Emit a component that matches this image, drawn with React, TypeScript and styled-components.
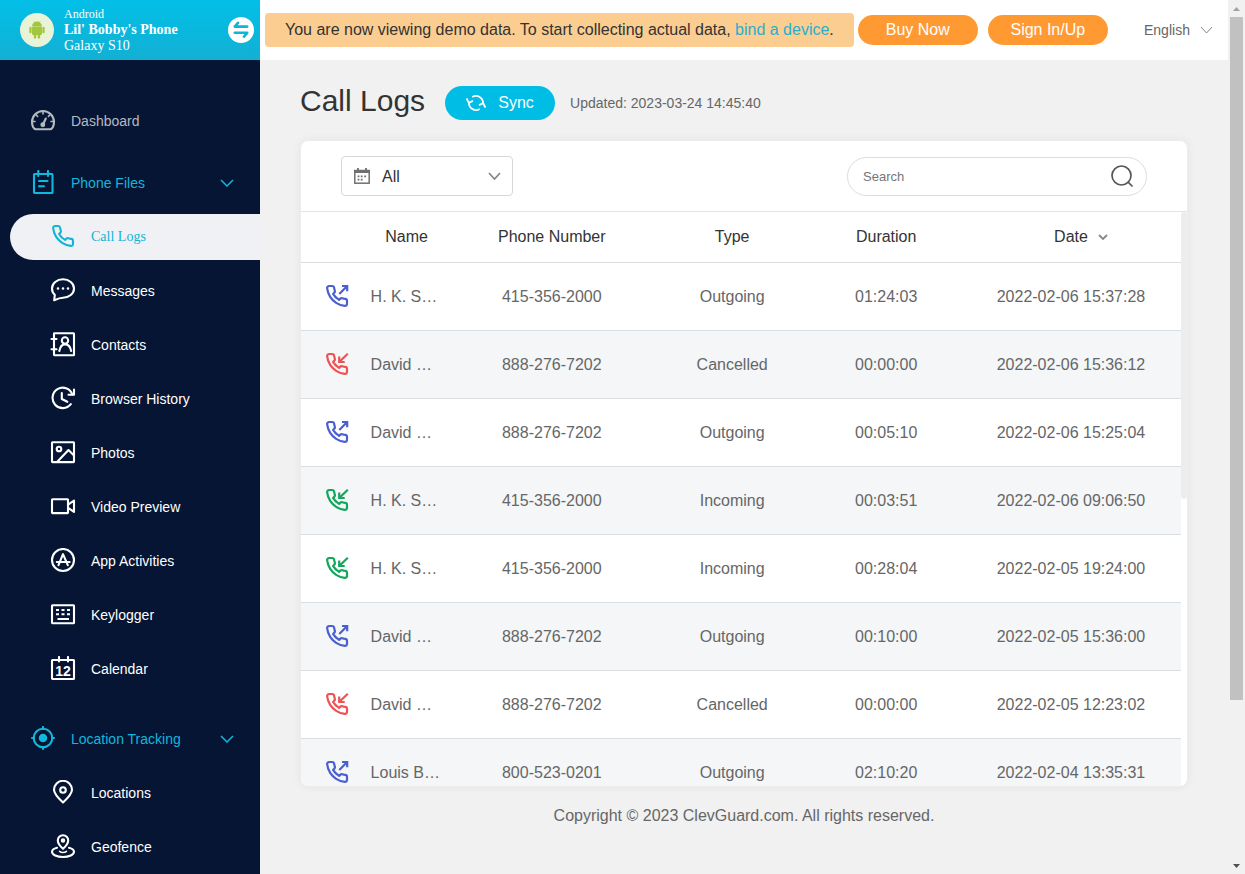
import React from "react";
import styled, { createGlobalStyle } from "styled-components";

const GlobalStyle = createGlobalStyle`
  *, *::before, *::after { box-sizing: border-box; }
  body {
    margin: 0;
    background: #f1f1f1;
    color: #333;
    font: 16px/20px "Liberation Sans", Arial, sans-serif;
  }
  button, select, input { font-family: inherit; }
  ul { list-style: none; margin: 0; padding: 0; }
  svg { display: block; flex: none; }
`;

/* ---------- page frame ---------- */

const Page = styled.div`
  display: flex;
  height: 100vh;
  overflow: hidden;
`;

const Sidebar = styled.aside`
  flex: none;
  width: 260px;
  overflow: hidden;
  background: #061533;
`;

const Main = styled.div`
  flex: 1;
  min-width: 0;
  display: flex;
  flex-direction: column;
`;

/* ---------- sidebar ---------- */

const DeviceBar = styled.header`
  display: flex;
  align-items: center;
  gap: 10px;
  height: 60px;
  padding: 0 6px 0 20px;
  background: linear-gradient(#02bfe7, #12b0d3);
  color: #fff;
  font: 14px/16px "Liberation Serif", "Times New Roman", serif;
`;

const Avatar = styled.div`
  display: grid;
  place-items: center;
  width: 34px;
  height: 34px;
  border-radius: 50%;
  background: #e9f3d8;
`;

const DeviceText = styled.div`
  flex: 1;
`;

const DeviceOs = styled.div`
  font-size: 12px;
`;

const DeviceName = styled.div`
  font-weight: bold;
`;

const SwitchButton = styled.button`
  display: grid;
  place-items: center;
  width: 26px;
  height: 26px;
  padding: 0;
  border: 0;
  border-radius: 50%;
  background: #fff;
  color: #0fb4d8;
`;

const Nav = styled.nav`
  padding-top: 30px;
  font-size: 14px;
`;

const NavGroup = styled.a<{ $open?: boolean }>`
  display: flex;
  align-items: center;
  gap: 15px;
  height: 62px;
  padding: 0 26px 0 30px;
  color: ${(p) => (p.$open ? "#12b7dc" : "#b4b9c2")};
  text-decoration: none;
`;

const NavLabel = styled.span`
  flex: 1;
`;

const SubList = styled.ul`
  display: flex;
  flex-direction: column;
  gap: 8px;
  padding-bottom: 16px;
`;

const NavItem = styled.a<{ $active?: boolean }>`
  display: flex;
  align-items: center;
  gap: 15px;
  height: 46px;
  margin-left: 10px;
  padding-left: 40px;
  border-radius: 23px 0 0 23px;
  color: ${(p) => (p.$active ? "#12b3d6" : "#fff")};
  background: ${(p) => (p.$active ? "#f0f1f5" : "transparent")};
  font-family: ${(p) => (p.$active ? '"Liberation Serif", "Times New Roman", serif' : "inherit")};
  text-decoration: none;
`;

/* ---------- top bar ---------- */

const TopBar = styled.header`
  flex: none;
  display: flex;
  align-items: center;
  height: 60px;
  padding: 0 15px 0 5px;
  background: #fff;
`;

const Notice = styled.p`
  margin: 0 4px 0 0;
  padding: 7px 20px;
  border-radius: 4px;
  background: #fbcd91;
  white-space: nowrap;
`;

const NoticeLink = styled.a`
  color: #2aaed0;
  text-decoration: none;
`;

const TopButton = styled.button`
  flex: none;
  width: 120px;
  height: 30px;
  margin-right: 10px;
  padding: 0;
  border: 0;
  border-radius: 15px;
  background: #ff9a33;
  color: #fff;
  font-size: 16px;
`;

const SelectWrap = styled.div`
  position: relative;
  flex: none;
`;

const Overlay = styled.span<{ $side: "left" | "right"; $inset: number }>`
  position: absolute;
  top: 0;
  bottom: 0;
  ${(p) => p.$side}: ${(p) => p.$inset}px;
  display: flex;
  align-items: center;
  color: #888;
  pointer-events: none;
`;

const LanguageWrap = styled(SelectWrap)`
  margin-left: auto;
`;

const LanguageSelect = styled.select`
  appearance: none;
  width: 69px;
  height: 30px;
  padding: 0;
  border: 0;
  background: transparent;
  color: #666;
  font-size: 14px;
`;

/* ---------- content ---------- */

const Content = styled.main`
  flex: 1;
  min-height: 0;
  display: flex;
  flex-direction: column;
  padding: 0 40px;
`;

const TitleRow = styled.div`
  flex: none;
  display: flex;
  align-items: center;
  height: 80px;
  padding-top: 5px;
`;

const Title = styled.h1`
  margin: 0 20px 0 0;
  padding-bottom: 4px;
  font-size: 30px;
  line-height: 36px;
  font-weight: normal;
`;

const SyncButton = styled.button`
  display: flex;
  align-items: center;
  justify-content: center;
  gap: 12px;
  width: 110px;
  height: 34px;
  margin-right: 15px;
  padding: 0;
  border: 0;
  border-radius: 17px;
  background: #00bde6;
  color: #fff;
  font-size: 16px;
`;

const Updated = styled.span`
  color: #666;
  font-size: 14px;
`;

const Card = styled.section`
  flex: 1;
  min-height: 0;
  display: flex;
  flex-direction: column;
  border: 1px solid #ececec;
  border-radius: 8px;
  background: #fff;
  box-shadow: 0 0 8px rgba(0, 0, 0, 0.06);
  overflow: hidden;
`;

const Toolbar = styled.div`
  flex: none;
  display: flex;
  align-items: center;
  justify-content: space-between;
  height: 71px;
  padding: 0 40px;
  border-bottom: 1px solid #e1e3e6;
`;

const FilterSelect = styled.select`
  appearance: none;
  width: 172px;
  height: 40px;
  padding: 0 40px;
  border: 1px solid #d8d8d8;
  border-radius: 4px;
  background: #fff;
  color: #333;
  font-size: 16px;
`;

const Search = styled.form`
  display: flex;
  align-items: center;
  width: 300px;
  height: 39px;
  padding: 0 13px 0 15px;
  border: 1px solid #dcdcdc;
  border-radius: 20px;
`;

const SearchInput = styled.input`
  flex: 1;
  min-width: 0;
  padding: 0;
  border: 0;
  outline: 0;
  background: transparent;
  font-size: 13px;
  &::placeholder { color: #757575; }
`;

const IconButton = styled.button`
  padding: 0;
  border: 0;
  background: transparent;
  color: #555;
`;

const TableArea = styled.div`
  flex: 1;
  min-height: 0;
  display: flex;
`;

const TableClip = styled.div`
  flex: 1;
  min-width: 0;
  overflow: hidden;
`;

const TableThumb = styled.div`
  flex: none;
  width: 6px;
  height: 50%;
  border-radius: 4px;
  background: #ededed;
`;

const Table = styled.table`
  width: 100%;
  table-layout: fixed;
  border-collapse: separate;
  border-spacing: 0;
`;

const Col = styled.col<{ $share: number }>`
  width: ${(p) => p.$share}%;
`;

const Head = styled.th`
  height: 51px;
  padding: 0;
  border-bottom: 1px solid #dadde1;
  font-weight: normal;
`;

const SortButton = styled.button`
  position: relative;
  padding: 0 20px;
  border: 0;
  background: transparent;
  color: inherit;
  font-size: 16px;
`;

const Row = styled.tr`
  color: #666;
  &:nth-child(even) { background: #f4f6f8; }
`;

const Cell = styled.td`
  height: 68px;
  padding: 0;
  border-bottom: 1px solid #dadde1;
  text-align: center;
`;

const IconCell = styled(Cell)`
  padding: 0 0 2px 24px;
`;

const NameCell = styled(Cell)`
  padding-left: 8px;
  text-align: left;
`;

const Footer = styled.footer`
  flex: none;
  height: 87px;
  color: #666;
  line-height: 58px;
  text-align: center;
`;

/* ---------- page scrollbar ---------- */

const ScrollTrack = styled.div`
  flex: none;
  display: flex;
  flex-direction: column;
  align-items: center;
  width: 17px;
  background: #f1f1f1;
`;

const ScrollArrow = styled.div<{ $down?: boolean }>`
  display: grid;
  place-items: center;
  height: 17px;
  color: ${(p) => (p.$down ? "#505050" : "#a3a3a3")};
`;

const ScrollLane = styled.div`
  flex: 1;
  display: grid;
  grid-template-rows: 13fr 3fr;
  width: 13px;
`;

const ScrollThumb = styled.div`
  background: #c1c1c1;
`;

/* ---------- icons ---------- */

const Icon = ({ size = 26, box, width = 2.1, children }: { size?: number; box?: string; width?: number; children: React.ReactNode }) => (
  <svg
    width={size}
    height={size}
    viewBox={box ?? `0 0 ${size} ${size}`}
    fill="none"
    stroke="currentColor"
    strokeWidth={width}
    strokeLinecap="round"
    strokeLinejoin="round"
    aria-hidden="true"
  >
    {children}
  </svg>
);

const HANDSET =
  "M22 16.92v3a2 2 0 0 1-2.18 2 19.79 19.79 0 0 1-8.63-3.07 19.5 19.5 0 0 1-6-6 19.79 19.79 0 0 1-3.07-8.67A2 2 0 0 1 4.11 2h3a2 2 0 0 1 2 1.72 12.84 12.84 0 0 0 .7 2.81 2 2 0 0 1-.45 2.11L8.09 9.91a16 16 0 0 0 6 6l1.27-1.27a2 2 0 0 1 2.11-.45 12.84 12.84 0 0 0 2.81.7A2 2 0 0 1 22 16.92z";

const Chevron = ({ w, h, stroke = 1.5 }: { w: number; h: number; stroke?: number }) => (
  <svg width={w} height={h} viewBox={`0 0 ${w} ${h}`} fill="none" stroke="currentColor" strokeWidth={stroke} aria-hidden="true">
    <path d={`M1 1L${w / 2} ${h - 1}L${w - 1} 1`} />
  </svg>
);

const icons = {
  dashboard: (
    <Icon>
      <path d="M6 21.200h14c2.500 0 4-3.600 4-7.200a11 11 0 0 0-22 0c0 3.600 1.500 7.200 4 7.200z" />
      <path d="M13 3.500v2.500M6 6.800l1.600 1.600M20 6.800l-1.600 1.600M2.500 13.500h2.500M21 13.500h2.500" strokeWidth="1.600" />
      <path d="M13 16.500l2.800-6" />
      <circle cx="12.800" cy="16.800" r="1.400" fill="currentColor" />
    </Icon>
  ),
  files: (
    <Icon>
      <rect x="4" y="4" width="18.500" height="19" rx=".5" />
      <path d="M8.300 1v5M18 1v5M9 11h8.500M9 16.300h5" />
    </Icon>
  ),
  phone: (
    <Icon box="-1 0 26 26">
      <path d={HANDSET} />
    </Icon>
  ),
  messages: (
    <Icon>
      <path d="M4.200 22.200l.6-5.400C3 15.200 2 13 2 10.500 2 5.300 6.900 1.300 13 1.300s11 4 11 9.200-4.900 9.200-11 9.200c-2.600 0-4.800.7-8.800 2.500z" />
      <path d="M8 10.500h.01M13 10.500h.01M18 10.500h.01" strokeWidth="2.600" />
    </Icon>
  ),
  contacts: (
    <Icon>
      <rect x="4" y="1.200" width="20" height="22" rx=".5" />
      <path d="M1.500 7h5M1.500 17.300h5" />
      <circle cx="15" cy="8.500" r="3.200" />
      <path d="M9.300 19c.8-4.200 2.700-6.600 5.700-6.600s5.400 2.400 6.200 6.600" />
    </Icon>
  ),
  history: (
    <Icon>
      <path d="M20.800 18.200A10.200 10.200 0 1 1 22.300 8.300" />
      <path d="M24 3.500v5.300h-5.500M11.800 7v6l5.500 2.800" />
    </Icon>
  ),
  photos: (
    <Icon>
      <rect x="2" y="2.300" width="22" height="19.800" rx=".5" />
      <circle cx="9" cy="9" r="2.300" />
      <path d="M7.500 21.500L18.500 10l5 5" />
    </Icon>
  ),
  video: (
    <Icon>
      <rect x="2" y="5.300" width="16" height="13.800" rx=".5" />
      <path d="M18.500 10.300L24 6.500v11.400l-5.500-3.800" />
    </Icon>
  ),
  apps: (
    <Icon>
      <circle cx="13" cy="12" r="11" />
      <path d="M8.500 17.200L13 6.200l4.800 11M6.800 14h12.800" />
    </Icon>
  ),
  keylogger: (
    <Icon>
      <rect x="2" y="3.200" width="22" height="18" rx=".5" />
      <path d="M6 8h3M11.500 8h3M17 8h3M6 12.200h3M11.500 12.200h3M17 12.200h3M7.500 17h11.500" strokeLinecap="butt" />
    </Icon>
  ),
  calendar: (
    <Icon>
      <rect x="2" y="4" width="22" height="19" rx=".5" />
      <path d="M9 1v4.500M18 1v4.500" />
      <text x="13" y="19.800" fontSize="14" fontWeight="bold" textAnchor="middle" fill="currentColor" stroke="none">
        12
      </text>
    </Icon>
  ),
  tracking: (
    <Icon>
      <circle cx="13" cy="12" r="9.300" />
      <circle cx="13" cy="12" r="3.200" fill="currentColor" />
      <path d="M13 1v2M13 21v2M2 12h2M22 12h2" />
    </Icon>
  ),
  pin: (
    <Icon>
      <path d="M13 22.500C7 17 4 13.400 4 9.800a9 9 0 0 1 18 0c0 3.600-3 7.200-9 12.700z" />
      <circle cx="13" cy="10" r="2.800" />
    </Icon>
  ),
  geofence: (
    <Icon>
      <path d="M13 14.800C9.300 11.400 7.800 9 7.800 6.500a5.200 5.200 0 0 1 10.400 0c0 2.500-1.500 4.900-5.200 8.300z" />
      <circle cx="13" cy="6.500" r="1.200" />
      <path d="M7 13.800c-3 .8-5 2.300-5 4 0 2.900 4.900 5.200 11 5.200s11-2.300 11-5.200c0-1.700-2-3.200-5-4" />
      <path d="M9.500 17.300c1.800 1.500 5.200 1.500 7 0" strokeWidth="1.500" />
    </Icon>
  ),
};

const Robot = () => (
  <svg width="16" height="18" viewBox="0 0 14 16" fill="#a2c63c" aria-hidden="true">
    <path d="M2.600 4.900a4.400 4.400 0 0 1 8.800 0z" />
    <path d="M4.200.3l1 1.700M9.800.3l-1 1.700" stroke="#a2c63c" strokeWidth=".6" />
    <rect x="2.600" y="5.200" width="8.800" height="7.300" rx="1" />
    <rect x=".2" y="5.200" width="2" height="5.700" rx="1" />
    <rect x="11.800" y="5.200" width="2" height="5.700" rx="1" />
    <rect x="4.200" y="11" width="2.100" height="4.700" rx="1" />
    <rect x="7.700" y="11" width="2.100" height="4.700" rx="1" />
  </svg>
);

type Kind = "Outgoing" | "Incoming" | "Cancelled";

const CallGlyph = styled.span<{ $kind: Kind }>`
  display: block;
  color: ${(p) => ({ Outgoing: "#4a5fd0", Incoming: "#12a75c", Cancelled: "#ee5253" })[p.$kind]};
`;

const CallIcon = ({ kind }: { kind: Kind }) => (
  <CallGlyph $kind={kind}>
    <Icon size={24} width={2.2}>
      <path d={HANDSET} />
      <path d={kind === "Outgoing" ? "M14.300 10L22.200 2M17 2h5.200v5.200" : "M22.800 1.800L14.200 10M14.200 4.500V10h5.500"} strokeLinecap="butt" strokeLinejoin="miter" />
    </Icon>
  </CallGlyph>
);

/* ---------- data ---------- */

const phoneFiles: { label: string; icon: keyof typeof icons; active?: boolean }[] = [
  { label: "Call Logs", icon: "phone", active: true },
  { label: "Messages", icon: "messages" },
  { label: "Contacts", icon: "contacts" },
  { label: "Browser History", icon: "history" },
  { label: "Photos", icon: "photos" },
  { label: "Video Preview", icon: "video" },
  { label: "App Activities", icon: "apps" },
  { label: "Keylogger", icon: "keylogger" },
  { label: "Calendar", icon: "calendar" },
];

const tracking: typeof phoneFiles = [
  { label: "Locations", icon: "pin" },
  { label: "Geofence", icon: "geofence" },
];

const calls: [string, string, Kind, string, string][] = [
  ["H. K. S…", "415-356-2000", "Outgoing", "01:24:03", "2022-02-06 15:37:28"],
  ["David …", "888-276-7202", "Cancelled", "00:00:00", "2022-02-06 15:36:12"],
  ["David …", "888-276-7202", "Outgoing", "00:05:10", "2022-02-06 15:25:04"],
  ["H. K. S…", "415-356-2000", "Incoming", "00:03:51", "2022-02-06 09:06:50"],
  ["H. K. S…", "415-356-2000", "Incoming", "00:28:04", "2022-02-05 19:24:00"],
  ["David …", "888-276-7202", "Outgoing", "00:10:00", "2022-02-05 15:36:00"],
  ["David …", "888-276-7202", "Cancelled", "00:00:00", "2022-02-05 12:23:02"],
  ["Louis B…", "800-523-0201", "Outgoing", "02:10:20", "2022-02-04 13:35:31"],
];

/* ---------- parts ---------- */

const Items = ({ items }: { items: typeof phoneFiles }) => (
  <SubList>
    {items.map((item) => (
      <li key={item.label}>
        <NavItem href="#" $active={item.active} aria-current={item.active ? "page" : undefined}>
          {icons[item.icon]}
          {item.label}
        </NavItem>
      </li>
    ))}
  </SubList>
);

const SideNav = () => (
  <Sidebar>
    <DeviceBar>
      <Avatar>
        <Robot />
      </Avatar>
      <DeviceText>
        <DeviceOs>Android</DeviceOs>
        <DeviceName>Lil' Bobby's Phone</DeviceName>
        <div>Galaxy S10</div>
      </DeviceText>
      <SwitchButton aria-label="Switch device">
        <Icon size={18} width={2.6}>
          <path d="M6 1.800L2.800 5.600h12.400M2.800 11.800h12.400L12 15.600" />
        </Icon>
      </SwitchButton>
    </DeviceBar>
    <Nav>
      <NavGroup href="#">
        {icons.dashboard}
        <NavLabel>Dashboard</NavLabel>
      </NavGroup>
      <NavGroup href="#" $open>
        {icons.files}
        <NavLabel>Phone Files</NavLabel>
        <Chevron w={14} h={8} />
      </NavGroup>
      <Items items={phoneFiles} />
      <NavGroup href="#" $open>
        {icons.tracking}
        <NavLabel>Location Tracking</NavLabel>
        <Chevron w={14} h={8} />
      </NavGroup>
      <Items items={tracking} />
    </Nav>
  </Sidebar>
);

const CallTable = () => (
  <Table>
    <colgroup>
      <Col $share={7} />
      <Col $share={10} />
      <Col $share={23} />
      <Col $share={18} />
      <Col $share={17} />
      <Col $share={25} />
    </colgroup>
    <thead>
      <tr>
        <Head aria-label="Call direction" />
        <Head scope="col">Name</Head>
        <Head scope="col">Phone Number</Head>
        <Head scope="col">Type</Head>
        <Head scope="col">Duration</Head>
        <Head scope="col">
          <SortButton>
            Date
            <Overlay $side="right" $inset={0}>
              <Chevron w={10} h={6} stroke={1.8} />
            </Overlay>
          </SortButton>
        </Head>
      </tr>
    </thead>
    <tbody>
      {calls.map(([name, number, kind, duration, date]) => (
        <Row key={date}>
          <IconCell>
            <CallIcon kind={kind} />
          </IconCell>
          <NameCell>{name}</NameCell>
          <Cell>{number}</Cell>
          <Cell>{kind}</Cell>
          <Cell>{duration}</Cell>
          <Cell>{date}</Cell>
        </Row>
      ))}
    </tbody>
  </Table>
);

export default function App() {
  return (
    <Page>
      <GlobalStyle />
      <SideNav />
      <Main>
        <TopBar>
          <Notice>
            You are now viewing demo data. To start collecting actual data, <NoticeLink href="#">bind a device</NoticeLink>.
          </Notice>
          <TopButton>Buy Now</TopButton>
          <TopButton>Sign In/Up</TopButton>
          <LanguageWrap>
            <LanguageSelect aria-label="Language">
              <option>English</option>
            </LanguageSelect>
            <Overlay $side="right" $inset={0}>
              <Chevron w={13} h={8} stroke={1} />
            </Overlay>
          </LanguageWrap>
        </TopBar>
        <Content>
          <TitleRow>
            <Title>Call Logs</Title>
            <SyncButton>
              <svg width="20" height="18" viewBox="0 0 20 18" fill="none" stroke="currentColor" strokeWidth="1.800" aria-hidden="true">
                <path d="M6.300 3A7 7 0 0 1 17 9.400M13.700 15A7 7 0 0 1 3 8.600" />
                <path d="M.6 4.500L2.800 8.800 7 6.900M19.400 13.500L17.200 9.200 13 11.100" />
              </svg>
              Sync
            </SyncButton>
            <Updated>Updated: 2023-03-24 14:45:40</Updated>
          </TitleRow>
          <Card>
            <Toolbar>
              <SelectWrap>
                <FilterSelect aria-label="Date range">
                  <option>All</option>
                </FilterSelect>
                <Overlay $side="left" $inset={13}>
                  <svg width="16" height="16" viewBox="0 0 16 16" fill="none" stroke="#707070" strokeWidth="1.500" aria-hidden="true">
                    <rect x=".8" y="2.500" width="14.400" height="12.700" />
                    <path d="M0 3.500h16" strokeWidth="3" />
                    <path d="M4 0v3M12 0v3" strokeWidth="1.800" />
                    <path d="M6.800 8.400h1.800M10.200 8.400h1.800M3.600 8.400h1.800M3.600 11.600h1.800M6.800 11.600h1.800" strokeWidth="1.700" />
                  </svg>
                </Overlay>
                <Overlay $side="right" $inset={12}>
                  <Chevron w={13} h={8} stroke={1.8} />
                </Overlay>
              </SelectWrap>
              <Search>
                <SearchInput type="search" placeholder="Search" aria-label="Search" />
                <IconButton type="button" aria-label="Run search">
                  <Icon size={22} width={1.7}>
                    <circle cx="10.500" cy="10.500" r="9.500" />
                    <path d="M17.500 17.500l3.500 3.500" />
                  </Icon>
                </IconButton>
              </Search>
            </Toolbar>
            <TableArea>
              <TableClip>
                <CallTable />
              </TableClip>
              <TableThumb />
            </TableArea>
          </Card>
          <Footer>Copyright © 2023 ClevGuard.com. All rights reserved.</Footer>
        </Content>
      </Main>
      <ScrollTrack aria-hidden="true">
        <ScrollArrow>
          <svg width="7" height="4" viewBox="0 0 7 4" fill="currentColor">
            <path d="M0 4L3.500 0 7 4z" />
          </svg>
        </ScrollArrow>
        <ScrollLane>
          <ScrollThumb />
        </ScrollLane>
        <ScrollArrow $down>
          <svg width="7" height="4" viewBox="0 0 7 4" fill="currentColor">
            <path d="M0 0L3.500 4 7 0z" />
          </svg>
        </ScrollArrow>
      </ScrollTrack>
    </Page>
  );
}
